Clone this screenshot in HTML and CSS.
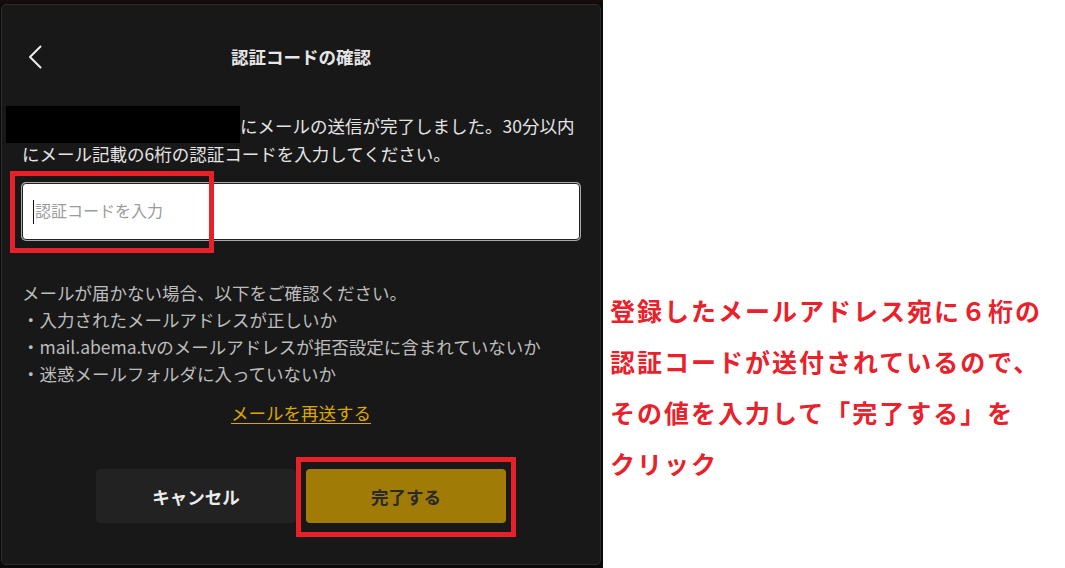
FILE: index.html
```html
<!DOCTYPE html>
<html lang="ja">
<head>
<meta charset="utf-8">
<title>認証コードの確認</title>
<link rel="stylesheet" href="styles.css">
</head>
<body>
<div class="page">
  <div class="stage">
    <div class="dialog">
      <div class="header">
        <button class="back" type="button" aria-label="戻る">
          <svg width="14" height="24" viewBox="0 0 14 24"><path d="M12.5 1.5 L2 12 L12.5 22.5" fill="none" stroke="#ececec" stroke-width="2" stroke-linecap="round" stroke-linejoin="round"/></svg>
        </button>
        <h1 class="title">認証コードの確認</h1>
      </div>
      <p class="lead"><span class="redact"></span>にメールの送信が完了しました。30分以内<br>にメール記載の6桁の認証コードを入力してください。</p>
      <div class="field"><span class="caret"></span><span class="placeholder">認証コードを入力</span></div>
      <div class="help">
        <p>メールが届かない場合、以下をご確認ください。</p>
        <p>・入力されたメールアドレスが正しいか</p>
        <p>・mail.abema.tvのメールアドレスが拒否設定に含まれていないか</p>
        <p>・迷惑メールフォルダに入っていないか</p>
      </div>
      <a class="resend" href="#">メールを再送する</a>
      <div class="actions">
        <button class="btn cancel" type="button">キャンセル</button>
        <button class="btn done" type="button">完了する</button>
      </div>
    </div>
    <div class="mark mark-input"></div>
    <div class="mark mark-done"></div>
  </div>
  <div class="note">登録したメールアドレス宛に６桁の<br>認証コードが送付されているので、<br>その値を入力して「完了する」を<br>クリック</div>
</div>
</body>
</html>
```

FILE: styles.css
```css
* { box-sizing: border-box; }
html, body { margin: 0; padding: 0; }
body {
  width: 1065px;
  height: 568px;
  overflow: hidden;
  background: #ffffff;
  font-family: "Noto Sans CJK JP", "Noto Sans", sans-serif;
}
.page {
  display: flex;
  height: 568px;
}
.stage {
  position: relative;
  width: 603px;
  height: 568px;
  padding: 4px 2px 3px 1px;
  background: linear-gradient(180deg, #1a0c0c 0px, #0b0a0a 5px, #0b0a0a 100%);
}
.dialog {
  width: 600px;
  height: 561px;
  background: #181818;
  border: 1px solid #2c2c2c;
  border-radius: 5px;
  display: flex;
  flex-direction: column;
}
.header {
  display: grid;
  grid-template-columns: 60px 1fr 60px;
  align-items: center;
  height: 50px;
  margin-top: 27px;
}
.back {
  justify-self: start;
  margin-left: 26px;
  padding: 0;
  border: 0;
  background: transparent;
  display: flex;
  align-items: center;
  height: 24px;
}
.title {
  margin: 0;
  text-align: center;
  font-size: 17.5px;
  font-weight: 700;
  color: #e6e6e6;
  line-height: 50px;
}
.lead {
  position: relative;
  margin: 30px 20px 0;
  font-size: 17.5px;
  line-height: 28px;
  color: #e4e4e4;
  text-indent: 218px;
  white-space: nowrap;
}
.redact {
  position: absolute;
  left: -16px;
  top: -6px;
  width: 234px;
  height: 37px;
  background: #000;
}
.field {
  margin: 15px 20px 0;
  height: 57px;
  background: #fff;
  border: 1px solid #222;
  box-shadow: 0 0 0 1px #a9a9a9;
  border-radius: 4px;
  display: flex;
  align-items: center;
  padding-left: 10px;
}
.caret {
  width: 1px;
  height: 24px;
  background: #111;
}
.placeholder {
  margin-left: 1px;
  font-size: 16px;
  line-height: 20px;
  padding-bottom: 4px;
  color: #9b9b9b;
}
.help {
  margin-top: 39px;
  padding: 0 20px;
  font-size: 17.5px;
  line-height: 27px;
  color: #bdbdbd;
}
.help p { margin: 0; }
.resend {
  align-self: center;
  margin-top: 12px;
  font-size: 17.5px;
  line-height: 27px;
  color: #dca600;
  text-decoration: underline;
  text-underline-offset: 3px;
}
.actions {
  display: flex;
  justify-content: center;
  gap: 10px;
  margin-top: 43px;
}
.btn {
  width: 200px;
  height: 54px;
  border: 0;
  border-radius: 4px;
  font-family: "Noto Sans CJK JP", "Noto Sans", sans-serif;
  font-size: 17.5px;
  font-weight: 700;
}
.cancel {
  background: #222222;
  color: #ececec;
}
.done {
  background: #a07b05;
  color: #2a2a2a;
}
.mark {
  position: absolute;
  border: 5px solid #e8202a;
}
.mark-input {
  left: 10px;
  top: 171px;
  width: 204px;
  height: 82px;
}
.mark-done {
  left: 296px;
  top: 457px;
  width: 220px;
  height: 80px;
}
.note {
  flex: 1;
  padding: 285px 0 0 7px;
  font-size: 25px;
  font-weight: 700;
  letter-spacing: 2px;
  line-height: 51px;
  color: #e8212b;
  white-space: nowrap;
}
```
